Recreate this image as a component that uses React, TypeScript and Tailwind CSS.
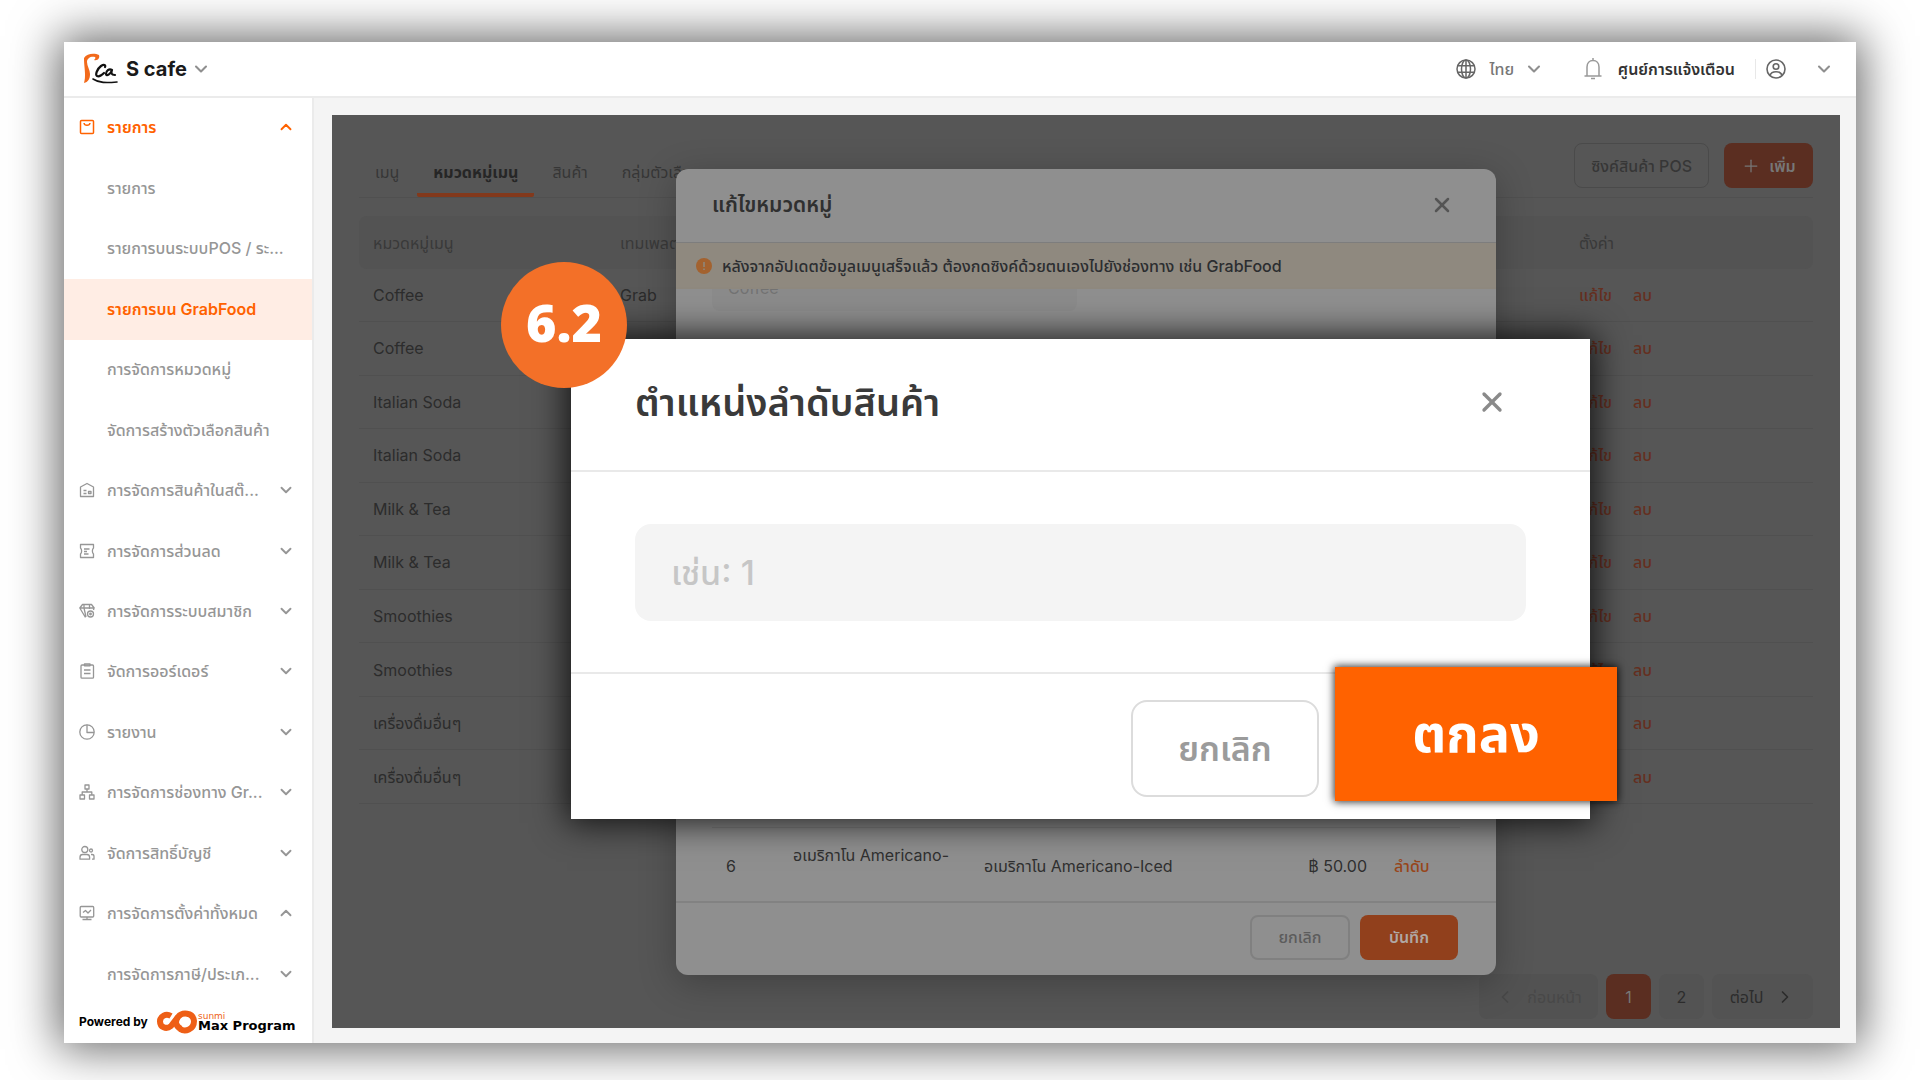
import { useState, type ReactNode } from "react";
import { ChevronDown, ChevronLeft, ChevronRight, ChevronUp, Plus, X } from "lucide-react";

interface NavItem {
  label: string;
  icon?: ReactNode;
  chevron?: "up" | "down";
  active?: boolean;
  highlighted?: boolean;
}

const Icon = ({ children }: { children: ReactNode }) => (
  <svg
    viewBox="0 0 16 16"
    fill="none"
    stroke="currentColor"
    strokeWidth="1.3"
    strokeLinejoin="round"
    className="w-4 h-4"
  >
    {children}
  </svg>
);

const navItems: NavItem[] = [
  {
    label: "รายการ",
    chevron: "up",
    active: true,
    icon: (
      <Icon>
        <rect x="1.5" y="1.5" width="13" height="13" rx="1" strokeWidth="1.5" />
        <path d="M5 4c.4 3 5.6 3 6 0" strokeWidth="1.5" />
      </Icon>
    ),
  },
  { label: "รายการ" },
  { label: "รายการบนระบบPOS / ระ..." },
  { label: "รายการบน GrabFood", highlighted: true },
  { label: "การจัดการหมวดหมู่" },
  { label: "จัดการสร้างตัวเลือกสินค้า" },
  {
    label: "การจัดการสินค้าในสต๊...",
    chevron: "down",
    icon: (
      <Icon>
        <path d="M1.5 14.5V5L8 1.5 14.5 5v9.5z" />
        <path d="M4.5 8.500h3M4.500 11.500h3M9.500 9.500h2.500v2H9.500z" />
      </Icon>
    ),
  },
  {
    label: "การจัดการส่วนลด",
    chevron: "down",
    icon: (
      <Icon>
        <path d="M1.500 1.500h13V5c-1.500 1.500-1.500 4.500 0 6v3.500h-13V11c1.500-1.500 1.500-4.500 0-6z" />
        <path d="M5 6h5.500M5 8.500h3M5 11h4.500" />
      </Icon>
    ),
  },
  {
    label: "การจัดการระบบสมาชิก",
    chevron: "down",
    icon: (
      <Icon>
        <path d="M.8 5 3.500 1.500h9L15.200 5H.8zM.8 5l5.700 9.500M5 1.500V5l2 9M10.500 1.500V6M15 5l-.5 2" />
        <circle cx="11.500" cy="11" r="3" />
        <circle cx="11.500" cy="11" r=".8" />
      </Icon>
    ),
  },
  {
    label: "จัดการออร์เดอร์",
    chevron: "down",
    icon: (
      <Icon>
        <rect x="2" y="2" width="12.500" height="13.200" rx="1" />
        <path d="M5.500 2.800V.8h5.500v2zM5 7h6.500M5 10.500h6.500" />
      </Icon>
    ),
  },
  {
    label: "รายงาน",
    chevron: "down",
    icon: (
      <Icon>
        <circle cx="8" cy="8" r="7.200" />
        <path d="M8 .8V8.500h7" />
      </Icon>
    ),
  },
  {
    label: "การจัดการช่องทาง Gr...",
    chevron: "down",
    icon: (
      <Icon>
        <path d="M6 1h4v4H6zM1 11h4.500v4H1zM10.500 11H15v4h-4.500zM8 5v3M3.200 11V8h9.600v3" />
      </Icon>
    ),
  },
  {
    label: "จัดการสิทธิ์บัญชี",
    chevron: "down",
    icon: (
      <Icon>
        <circle cx="5.800" cy="4.500" r="3" />
        <path d="M1 14.200v-2c0-1.800 1-2.700 2.700-2.700h4.200c1.700 0 2.700.9 2.700 2.700v2z" />
        <circle cx="12" cy="5.500" r="1.500" />
        <path d="M12 9.500h1c1.200 0 2 .7 2 1.800v2.900h-2" />
      </Icon>
    ),
  },
  {
    label: "การจัดการตั้งค่าทั้งหมด",
    chevron: "up",
    icon: (
      <Icon>
        <rect x="1.200" y="1.500" width="13.500" height="10.500" rx="1" />
        <path d="M4 7.500l2.500-2 2.500 2.500 3-3M8 12v2.500M3.500 14.500h9" />
      </Icon>
    ),
  },
  { label: "การจัดการภาษี/ประเภ...", chevron: "down" },
];

const categories = [
  "Coffee",
  "Coffee",
  "Italian Soda",
  "Italian Soda",
  "Milk & Tea",
  "Milk & Tea",
  "Smoothies",
  "Smoothies",
  "เครื่องดื่มอื่นๆ",
  "เครื่องดื่มอื่นๆ",
];

const tabs = ["เมนู", "หมวดหมู่เมนู", "สินค้า", "กลุ่มตัวเลือก"];

function Header() {
  return (
    <header className="flex items-center justify-between h-14 pl-5 pr-[22px] bg-white border-b-2 border-[#ebebeb]">
      <button className="flex items-center gap-2 text-[#1a1a1a]">
        <svg viewBox="0 0 34 32" className="w-[34px] h-8" fill="none">
          <path
            d="M0 5C3 0 11 0 15 2c1 3-1 6-5 5 1-1 2-2 1-3C7 3 3 5 3 9c0 4 3 8 3 12 0 5-2 8-6 9 1-4 1-6 1-9C1 16 0 12 0 5z"
            fill="#f26a1b"
          />
          <path
            d="M21 14c1-2-1-3-4-1-4 3-6 9-4 10 2 1 5-1 7-3M28 17c-3-2-6 1-6 4 0 3 5 0 6-4-1 3-1 5 3 5"
            stroke="#111"
            strokeWidth="2.2"
            strokeLinecap="round"
          />
          <path d="M9 26c6 4 13 4 24 3" stroke="#111" strokeWidth="1.6" strokeLinecap="round" />
        </svg>
        <span className="text-xl font-bold">S cafe</span>
        <ChevronDown className="w-5 h-5 -ml-1 text-[#8f8f8f]" strokeWidth={2.5} />
      </button>

      <div className="flex items-center text-[#777]">
        <button className="flex items-center gap-3">
          <svg viewBox="0 0 20 20" className="w-5 h-5" fill="none" stroke="#666" strokeWidth="1.5">
            <circle cx="10" cy="10" r="9" />
            <ellipse cx="10" cy="10" rx="4.5" ry="9" />
            <path d="M10 1v18M1.800 6.800h16.400M1.800 13.200h16.400" />
          </svg>
          <span className="w-7 text-base font-medium">ไทย</span>
          <ChevronDown className="w-5 h-5 -ml-1 text-[#8f8f8f]" strokeWidth={2.5} />
        </button>
        <button className="flex items-center gap-4 ml-10">
          <svg viewBox="0 0 18 22" className="w-[18px] h-[22px]" fill="none" stroke="#999" strokeWidth="1.5">
            <path d="M3 18V9c0-4 2.500-6.500 6-6.500S15 5 15 9v9M.5 18h17M9 0v2.500M7 20.500h4" />
          </svg>
          <span className="text-base font-semibold text-[#333]">ศูนย์การแจ้งเตือน</span>
        </button>
        <button
          className="flex items-center gap-7 ml-5 pl-[10px] border-l border-[#e8e8e8]"
          aria-label="บัญชีผู้ใช้"
        >
          <svg viewBox="0 0 20 20" className="w-5 h-5" fill="none" stroke="#666" strokeWidth="1.6">
            <circle cx="10" cy="10" r="9" />
            <circle cx="10" cy="7.5" r="2.8" />
            <path d="M4 16.500c1.500-5 10.500-5 12 0" />
          </svg>
          <ChevronDown className="w-5 h-5 text-[#8f8f8f]" strokeWidth={2.5} />
        </button>
      </div>
    </header>
  );
}

function Sidebar() {
  return (
    <aside className="flex flex-col shrink-0 w-[250px] bg-white border-r-2 border-[#ebebeb]">
      <nav className="flex flex-col flex-1">
        {navItems.map((item, index) => (
          <a
            key={index}
            href="#"
            className={`flex flex-1 items-center justify-between pb-0.5 pl-[15px] pr-[17px] text-base ${
              item.highlighted
                ? "bg-[#ffede4] font-semibold text-[#ff6200]"
                : item.active
                  ? "font-semibold text-[#ff6200]"
                  : "font-medium text-[#969696]"
            }`}
          >
            <span className="flex items-center whitespace-nowrap">
              <span className="w-7">{item.icon}</span>
              {item.label}
            </span>
            {item.chevron === "up" && <ChevronUp className="w-[18px] h-[18px]" strokeWidth={2.5} />}
            {item.chevron === "down" && <ChevronDown className="w-[18px] h-[18px]" strokeWidth={2.5} />}
          </a>
        ))}
      </nav>
      <div className="flex items-center h-[38px] pl-[15px] pb-1 text-black">
        <span className="w-[78px] text-xs font-bold">Powered by</span>
        <svg viewBox="0 0 40 24" className="w-10 h-6" fill="none" stroke="#ee5f16" strokeWidth="6">
          <path d="M14 6C9 3 3 6 3 11.500S9 20 14 16L21 7c4-5 15-5 16 4 0 9-9 11-14 8" />
          <path d="M21 7c-3 4-3 9 3 12" />
        </svg>
        <span className="flex flex-col pl-px font-['DejaVu_Sans']">
          <span className="text-[9px] leading-[8px] text-[#ee5f16]">sunmi</span>
          <span className="text-[13px] leading-3 font-bold whitespace-nowrap">Max Program</span>
        </span>
      </div>
    </aside>
  );
}

function CategoryPage() {
  return (
    <div className="flex flex-col flex-1 pt-7 px-[27px] pb-[9px] text-[#2c2c2c]">
      <div className="flex items-start justify-between h-[55px] border-b border-[#505050]">
        <div className="flex h-full gap-0.5 text-base">
          {tabs.map((tab, index) => (
            <button
              key={tab}
              className={`h-full px-4 pt-2 border-b-4 ${
                index === 1
                  ? "border-[#82391c] rounded-xs font-bold text-[#262626]"
                  : "border-transparent text-[#363636]"
              }`}
            >
              {tab}
            </button>
          ))}
        </div>
        <div className="flex gap-[15px] text-base">
          <button className="h-[45px] px-4 rounded-lg border border-[#4a4a4a] font-medium text-[#363636]">
            ซิงค์สินค้า POS
          </button>
          <button className="flex items-center justify-center gap-2 w-[89px] h-[45px] rounded-lg bg-[#5b2e21] text-[#777] font-semibold">
            <Plus className="w-5 h-5" strokeWidth={1.5} />
            เพิ่ม
          </button>
        </div>
      </div>

      <table className="w-full h-[588px] mt-[18px] table-fixed border-collapse text-base text-left">
        <thead>
          <tr className="h-[53px] bg-[#535353] text-[#393939]">
            <th className="w-[247px] pl-3.5 font-normal rounded-l-lg">หมวดหมู่เมนู</th>
            <th className="pl-3.5 font-normal">เทมเพลตเมนู</th>
            <th className="w-[248px] pl-3.5 font-normal rounded-r-lg">ตั้งค่า</th>
          </tr>
        </thead>
        <tbody>
          {categories.map((name, index) => (
            <tr key={index} className="border-b border-[#505050]">
              <td className="pl-3.5">{name}</td>
              <td className="pl-3.5">Grab</td>
              <td className="pl-3.5 font-medium text-[#652f20]">
                <span className="flex gap-[19px]">
                  <a href="#" className="w-[35px] whitespace-nowrap">แก้ไข</a>
                  <a href="#">ลบ</a>
                </span>
              </td>
            </tr>
          ))}
        </tbody>
      </table>

      <div className="flex justify-end gap-2 mt-auto text-base">
        <button className="flex items-center justify-center gap-3 w-[119px] h-[45px] rounded-lg bg-[#525252] text-[#484848]">
          <ChevronLeft className="w-5 h-5" />
          ก่อนหน้า
        </button>
        <button className="w-[45px] h-[45px] rounded-lg bg-[#5b2e21] text-[#777]">1</button>
        <button className="w-[45px] h-[45px] rounded-lg bg-[#535353]">2</button>
        <button className="flex items-center justify-center gap-3 w-[101px] h-[45px] rounded-lg bg-[#535353]">
          ต่อไป
          <ChevronRight className="w-5 h-5" />
        </button>
      </div>
    </div>
  );
}

function EditCategoryDialog() {
  return (
    <div className="absolute inset-0 flex items-center justify-center">
      <section className="flex flex-col w-[820px] h-[806px] rounded-xl overflow-hidden bg-[#8f8f8f] text-[#303030] shadow-[0_8px_36px_rgba(0,0,0,0.25)]">
        <div className="flex items-center justify-between h-[74px] pl-9 pr-[42px] border-b border-[#7d7d7d]">
          <h2 className="text-[21px] font-semibold">แก้ไขหมวดหมู่</h2>
          <button aria-label="ปิด" className="text-[#555]">
            <X className="w-6 h-6" strokeWidth={2.5} />
          </button>
        </div>
        <p className="flex items-center gap-[10px] h-[46px] shrink-0 pl-5 bg-[#8f897f] text-base font-medium text-[#2b2d30]">
          <svg viewBox="0 0 16 16" className="w-4 h-4">
            <circle cx="8" cy="8" r="8" fill="#a3622f" />
            <path d="M8 4v5M8 10.500v1.500" stroke="#8f897f" strokeWidth="1.5" />
          </svg>
          หลังจากอัปเดตข้อมูลเมนูเสร็จแล้ว ต้องกดซิงค์ด้วยตนเองไปยังช่องทาง เช่น GrabFood
        </p>
        {/* Scrolled body, the field is cut by the notice */}
        <div className="flex flex-col flex-1 justify-between overflow-hidden px-9">
          <input
            aria-label="ชื่อหมวดหมู่"
            defaultValue="Coffee"
            className="-mt-6 w-[365px] h-[46px] px-4 rounded-lg bg-[#8b8b8b] text-base text-[#737373]"
          />
          <table className="w-full h-[74px] table-fixed text-base border-t border-[#828282]">
            <tbody>
              <tr>
                <td className="w-[81px] pt-1 pl-3.5">6</td>
                <td className="w-[191px]">
                  <span className="block h-[50px] w-[170px] leading-8 whitespace-nowrap">
                    อเมริกาโน Americano-
                  </span>
                </td>
                <td className="pt-1">อเมริกาโน Americano-Iced</td>
                <td className="w-[101px] pt-1 text-right">฿ 50.00</td>
                <td className="w-[93px] pt-1 pl-[27px] font-medium text-[#98461a]">
                  <a href="#">ลำดับ</a>
                </td>
              </tr>
            </tbody>
          </table>
        </div>
        <div className="flex justify-end gap-[10px] h-[74px] pt-3 pr-[38px] border-t-2 border-[#828282] text-base">
          <button className="w-[100px] h-[45px] rounded-lg border-2 border-[#808080] font-medium text-[#5c5c5c]">
            ยกเลิก
          </button>
          <button className="w-[98px] h-[45px] rounded-lg bg-[#91401c] text-[#b0a8a4] font-semibold">บันทึก</button>
        </div>
      </section>
    </div>
  );
}

function ItemOrderDialog() {
  const [order, setOrder] = useState("");

  return (
    <div className="absolute inset-0 flex items-center justify-center pt-[15px] pr-[11px]">
      <section className="relative w-[1019px] bg-white shadow-[0_0_32px_4px_rgba(0,0,0,0.8)]">
        <div className="flex items-center justify-between h-[133px] pl-16 pr-[82px] pb-1.5 border-b-2 border-[#e9e9e9]">
          <h2 className="text-[38px] leading-[52px] font-semibold text-[#3a3a3a]">ตำแหน่งลำดับสินค้า</h2>
          <button aria-label="ปิด" className="text-[#8a8a8a]">
            <X className="w-8 h-8" strokeWidth={2.5} />
          </button>
        </div>
        <div className="h-[202px] pt-[52px] px-16 border-b-2 border-[#e9e9e9]">
          <input
            aria-label="ตำแหน่งลำดับสินค้า"
            value={order}
            onChange={(e) => setOrder(e.target.value)}
            placeholder="เช่น: 1"
            className="w-full h-[97px] px-9 rounded-2xl bg-[#f4f4f4] text-[34px] font-medium placeholder-[#c6c6c6] outline-none"
          />
        </div>
        <div className="h-[145px] pt-[26px] pl-[560px]">
          <button className="w-[188px] h-[97px] rounded-2xl border-2 border-[#dcdcdc] text-[34px] font-semibold text-[#9b9b9b]">
            ยกเลิก
          </button>
        </div>
        <button className="absolute -right-[27px] bottom-[18px] w-[282px] h-[134px] bg-[#ff6200] text-[52px] leading-[80px] font-bold text-white shadow-[0_0_8px_1px_rgba(0,0,0,0.8)]">
          ตกลง
        </button>
        <span className="absolute -left-[70px] -top-[77px] flex items-center justify-center w-[126px] h-[126px] pb-1.5 rounded-full bg-[#f37028] font-['Open_Sans'] text-[52px] leading-none font-extrabold text-white">
          6.2
        </span>
      </section>
    </div>
  );
}

export default function App() {
  return (
    <div className="flex flex-col min-h-screen px-16 pt-[42px] pb-[37px] bg-white font-['Inter','Noto_Sans_Thai',sans-serif]">
      <div className="flex flex-col flex-1 shadow-[0_0_44px_6px_rgba(0,0,0,0.6)]">
        <Header />
        <div className="flex flex-1">
          <Sidebar />
          <main className="flex flex-col flex-1 min-w-0 pt-[17px] pl-[18px] pr-4 pb-[15px] bg-[#f4f4f4]">
            <div className="relative flex flex-col flex-1 bg-[#565656]">
              <CategoryPage />
              <EditCategoryDialog />
              <ItemOrderDialog />
            </div>
          </main>
        </div>
      </div>
    </div>
  );
}
